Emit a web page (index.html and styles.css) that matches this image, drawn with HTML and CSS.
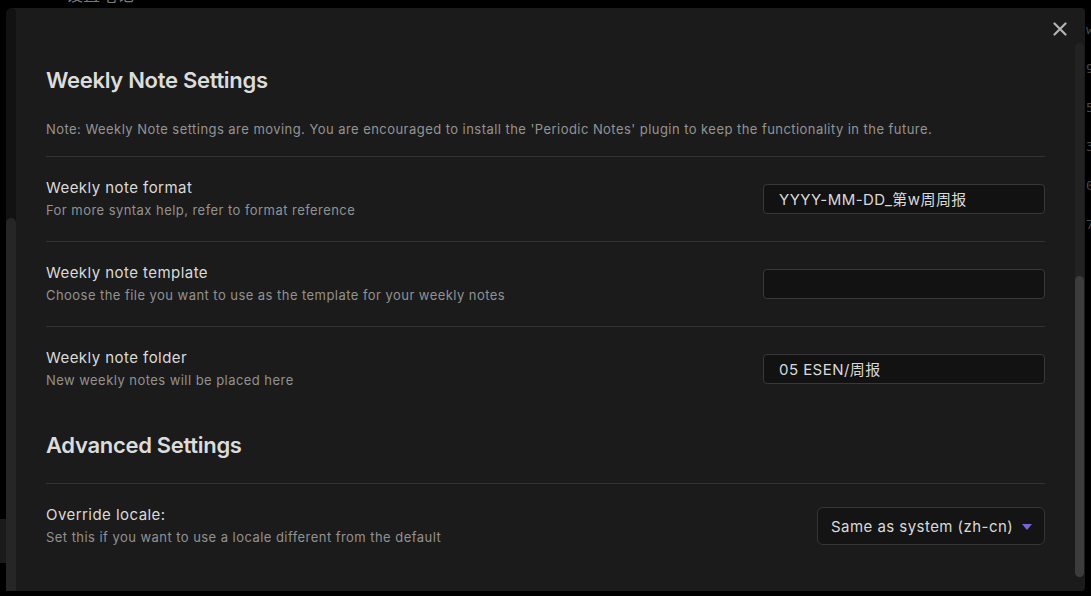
FILE: index.html
```html
<!DOCTYPE html>
<html lang="en">
<head>
<meta charset="utf-8">
<title>Weekly Note Settings</title>
<link rel="stylesheet" href="styles.css">
</head>
<body>
  <div class="app-bg">
    <div class="app-title">设置笔记</div>
    <div class="app-band"></div>
    <div class="app-gutter">
      <span>w</span><span>9</span><span>5</span><span>3</span><span>0</span><span>7</span>
    </div>
  </div>

  <div class="modal">
    <div class="side-edge"><div class="side-thumb"></div></div>
    <div class="modal-content">
      <button class="close" aria-label="Close">
        <svg width="14" height="14" viewBox="0 0 14 14"><path d="M1.5 1.5 L12.5 12.5 M12.5 1.5 L1.5 12.5" stroke="#b4b4b4" stroke-width="2.2" stroke-linecap="round" fill="none"/></svg>
      </button>
      <div class="scroll-track"><div class="scroll-thumb"></div></div>

      <div class="settings">
        <h2 class="section-title">Weekly Note Settings</h2>
        <p class="note">Note: Weekly Note settings are moving. You are encouraged to install the 'Periodic Notes' plugin to keep the functionality in the future.</p>

        <div class="setting-item">
          <div class="info">
            <div class="name">Weekly note format</div>
            <div class="desc">For more syntax help, refer to format reference</div>
          </div>
          <div class="text-input">YYYY-MM-DD_第w周周报</div>
        </div>

        <div class="setting-item">
          <div class="info">
            <div class="name">Weekly note template</div>
            <div class="desc">Choose the file you want to use as the template for your weekly notes</div>
          </div>
          <div class="text-input"></div>
        </div>

        <div class="setting-item">
          <div class="info">
            <div class="name">Weekly note folder</div>
            <div class="desc">New weekly notes will be placed here</div>
          </div>
          <div class="text-input">05 ESEN/周报</div>
        </div>

        <h2 class="section-title advanced">Advanced Settings</h2>

        <div class="setting-item">
          <div class="info">
            <div class="name">Override locale:</div>
            <div class="desc">Set this if you want to use a locale different from the default</div>
          </div>
          <div class="dropdown">
            <span>Same as system (zh-cn)</span>
            <svg class="caret" width="10" height="6" viewBox="0 0 10 6"><path d="M0 0 H10 L5 6 Z" fill="#7466d8"/></svg>
          </div>
        </div>
      </div>
    </div>
  </div>
</body>
</html>
```

FILE: styles.css
```css
* { box-sizing: border-box; }

html, body {
  margin: 0;
  height: 596px;
  overflow: hidden;
  background: #000;
}

body {
  padding: 8px 0 0 6px;
  font-family: Inter, "Noto Sans CJK SC", "Noto Sans", sans-serif;
  position: relative;
}

.app-bg {
  position: absolute;
  inset: 0;
  pointer-events: none;
}

.app-title {
  position: absolute;
  left: 66px;
  top: -13px;
  font-size: 17px;
  line-height: 16px;
  color: #7a7a7a;
}

.app-band {
  position: absolute;
  left: 0;
  top: 519px;
  width: 6px;
  height: 44px;
  background: #1a1a1a;
}

.app-gutter {
  position: absolute;
  left: 1086px;
  top: 22px;
  display: flex;
  flex-direction: column;
  gap: 23px;
  font-size: 13px;
  line-height: 16px;
  color: #4a4a4a;
  font-family: "DejaVu Sans Mono", monospace;
}

.modal {
  position: relative;
  width: 1079px;
  height: 583px;
  display: flex;
  background: #1b1b1b;
  border-radius: 6px 4px 4px 0;
  overflow: hidden;
}

.side-edge {
  width: 10px;
  flex: none;
  background: #121212;
  border-radius: 6px 6px 0 0;
  position: relative;
}

.side-thumb {
  position: absolute;
  left: 0;
  right: 0;
  top: 210px;
  bottom: 0;
  background: #262626;
  border-radius: 5px 5px 0 0;
}

.modal-content {
  flex: 1;
  position: relative;
  padding: 59px 40px 0 30px;
}

.close {
  position: absolute;
  top: 14px;
  right: 18px;
  width: 14px;
  height: 14px;
  padding: 0;
  border: 0;
  background: none;
  display: flex;
}

.scroll-track {
  position: absolute;
  right: 1px;
  top: 35px;
  bottom: 14px;
  width: 9px;
  background: #222;
  border-radius: 5px;
}

.scroll-thumb {
  position: absolute;
  left: 0;
  right: 0;
  top: 233px;
  bottom: 0;
  background: #3c3c3c;
  border-radius: 5px;
}

.section-title {
  margin: 0;
  font-size: 22px;
  line-height: 26px;
  font-weight: 600;
  letter-spacing: -0.3px;
  color: #dcdcdc;
}

.section-title.advanced {
  margin-top: 21px;
  margin-bottom: 25px;
}

.note {
  margin: 27px 0 18px;
  font-size: 13px;
  line-height: 18px;
  letter-spacing: 0.45px;
  color: #949494;
}

.setting-item {
  display: flex;
  align-items: center;
  justify-content: space-between;
  padding: 20px 0;
  border-top: 1px solid #333;
}

.name {
  font-size: 15px;
  line-height: 22px;
  letter-spacing: 0.45px;
  color: #dadada;
}

.desc {
  font-size: 13px;
  line-height: 22px;
  letter-spacing: 0.45px;
  color: #929292;
}

.text-input {
  width: 282px;
  height: 30px;
  background: #121212;
  border: 1px solid #383838;
  border-radius: 4px;
  padding: 1px 15px 0;
  font-size: 15px;
  line-height: 28px;
  letter-spacing: 0.45px;
  color: #dadada;
  white-space: nowrap;
}

.dropdown {
  width: 228px;
  height: 38px;
  background: #141414;
  border: 1px solid #363636;
  border-radius: 6px;
  padding: 0 12px 0 13px;
  display: flex;
  align-items: center;
  justify-content: space-between;
  font-size: 15px;
  letter-spacing: 0.45px;
  color: #dadada;
}

.caret { flex: none; margin-top: 1px; }
```
